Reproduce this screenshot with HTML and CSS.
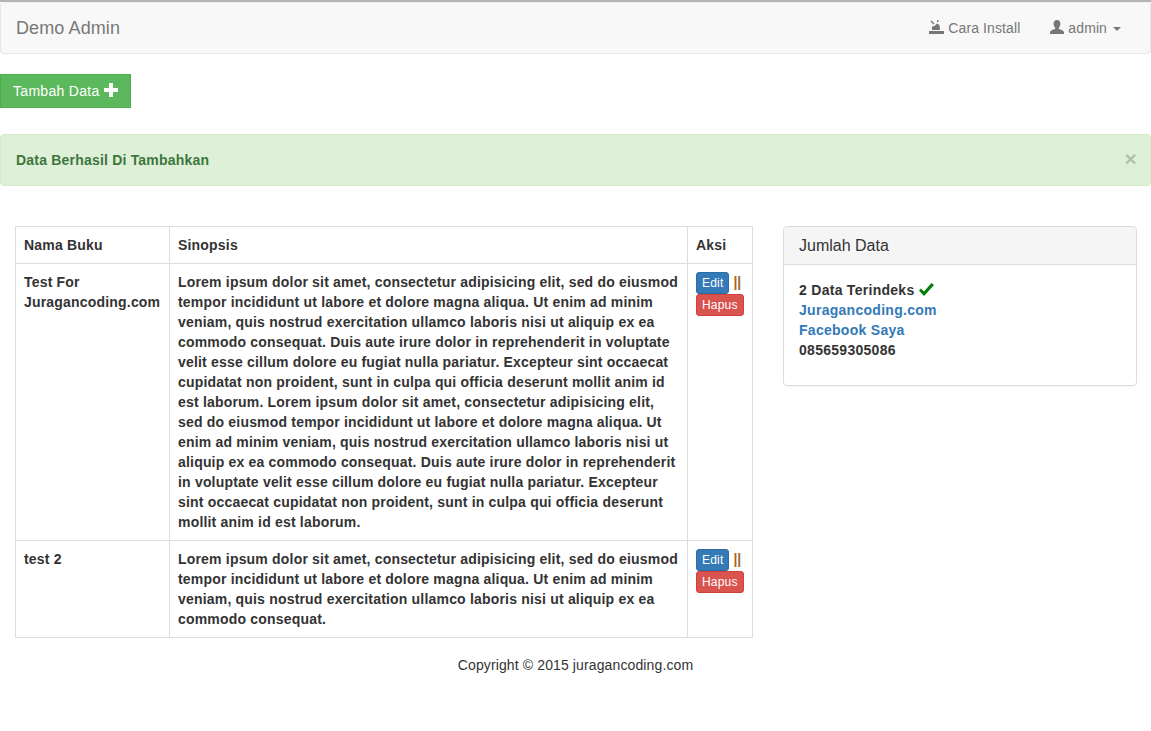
FILE: index.html
```html
<!DOCTYPE html>
<html lang="id">
<head>
<meta charset="utf-8">
<title>Demo Admin</title>
<link rel="stylesheet" href="styles.css">
</head>
<body>
<nav class="navbar">
  <a class="brand" href="#">Demo Admin</a>
  <ul class="nav">
    <li><a href="#"><svg class="ic" viewBox="0 0 15 14" width="15" height="14"><path fill="#777" d="M0 11h15v3H0zM3 10V6.500l2.500-.5 2.500-2.500 2.500 1.500.5 5zM1.500 1.500l1-1 3 3-1 1zM8 0h1.500v2H8z"/></svg> Cara Install</a></li>
    <li><a href="#"><svg class="ic" viewBox="0 0 14 14" width="14" height="14"><path fill="#777" d="M7 0c2.200 0 3.400 1.600 3.400 3.800 0 1.700-.7 3.200-1.600 4v1.300c2 .6 5.200 1.500 5.200 3.400V14H0v-1.500c0-1.900 3.200-2.800 5.200-3.400V7.800c-.9-.8-1.600-2.300-1.600-4C3.600 1.600 4.800 0 7 0z"/></svg> admin <span class="caret"></span></a></li>
  </ul>
</nav>
<a class="btn-add" href="#">Tambah Data <svg class="plus" viewBox="0 0 14 14" width="14" height="14"><path fill="#fff" d="M5 0h4v5h5v4H9v5H5V9H0V5h5z"/></svg></a>
<div class="alert">Data Berhasil Di Tambahkan<span class="close">×</span></div>
<main class="row">
  <section class="col-main">
    <table class="table">
      <thead>
        <tr><th class="c-name">Nama Buku</th><th class="c-syn">Sinopsis</th><th class="c-act">Aksi</th></tr>
      </thead>
      <tbody>
        <tr>
          <td>Test For Juragancoding.com</td>
          <td>Lorem ipsum dolor sit amet, consectetur adipisicing elit, sed do eiusmod tempor incididunt ut labore et dolore magna aliqua. Ut enim ad minim veniam, quis nostrud exercitation ullamco laboris nisi ut aliquip ex ea commodo consequat. Duis aute irure dolor in reprehenderit in voluptate velit esse cillum dolore eu fugiat nulla pariatur. Excepteur sint occaecat cupidatat non proident, sunt in culpa qui officia deserunt mollit anim id est laborum. Lorem ipsum dolor sit amet, consectetur adipisicing elit, sed do eiusmod tempor incididunt ut labore et dolore magna aliqua. Ut enim ad minim veniam, quis nostrud exercitation ullamco laboris nisi ut aliquip ex ea commodo consequat. Duis aute irure dolor in reprehenderit in voluptate velit esse cillum dolore eu fugiat nulla pariatur. Excepteur sint occaecat cupidatat non proident, sunt in culpa qui officia deserunt mollit anim id est laborum.</td>
          <td class="acts"><a class="xs blue" href="#">Edit</a> <span class="sep">||</span> <a class="xs red" href="#">Hapus</a></td>
        </tr>
        <tr>
          <td>test 2</td>
          <td>Lorem ipsum dolor sit amet, consectetur adipisicing elit, sed do eiusmod tempor incididunt ut labore et dolore magna aliqua. Ut enim ad minim veniam, quis nostrud exercitation ullamco laboris nisi ut aliquip ex ea commodo consequat.</td>
          <td class="acts"><a class="xs blue" href="#">Edit</a> <span class="sep">||</span> <a class="xs red" href="#">Hapus</a></td>
        </tr>
      </tbody>
    </table>
  </section>
  <aside class="col-side">
    <div class="panel">
      <div class="panel-head">Jumlah Data</div>
      <div class="panel-body">
        2 Data Terindeks <svg class="check" viewBox="0 0 15 13" width="15" height="13"><path fill="#008000" d="M0 7.500l2-2 3 3L12.500 0 15 2 5 13z"/></svg><br>
        <a href="#">Juragancoding.com</a><br>
        <a href="#">Facebook Saya</a><br>
        085659305086
      </div>
    </div>
  </aside>
</main>
<footer class="foot">Copyright © 2015 juragancoding.com</footer>
</body>
</html>
```
FILE: styles.css
```css
* { box-sizing: border-box; }
html, body { margin: 0; padding: 0; }
body {
  font-family: "Liberation Sans", Arial, sans-serif;
  font-size: 14px;
  line-height: 20px;
  color: #333;
  background: #fff;
  border-top: 2px solid #b4b4b4;
}
a { text-decoration: none; }
.navbar {
  display: flex;
  justify-content: space-between;
  height: 52px;
  background: #f8f8f8;
  border: 1px solid #e7e7e7;
  border-top-color: #f0f0f0;
  border-radius: 4px;
  margin-bottom: 20px;
}
.brand { color: #777; font-size: 18px; line-height: 20px; padding: 15px; letter-spacing: .1px; }
.nav { display: flex; list-style: none; margin: 0; padding: 0 14px 0 0; }
.nav a { display: block; color: #777; padding: 15px; letter-spacing: .1px; }
.ic { vertical-align: -1px; }
.caret {
  display: inline-block;
  width: 0; height: 0;
  margin-left: 2px;
  vertical-align: middle;
  border-top: 4px solid #777;
  border-left: 4px solid transparent;
  border-right: 4px solid transparent;
}
.btn-add {
  display: block;
  width: 131px;
  height: 34px;
  padding: 6px 12px;
  color: #fff;
  letter-spacing: .3px;
  background: #5cb85c;
  border: 1px solid #4cae4c;
  white-space: nowrap;
}
.plus { vertical-align: -1px; }
.alert {
  position: relative;
  height: 52px;
  margin-top: 26px;
  margin-bottom: 40px;
  padding: 15px;
  font-weight: bold;
  letter-spacing: .2px;
  color: #3c763d;
  background: #dff0d8;
  border: 1px solid #d6e9c6;
  border-radius: 4px;
}
.close {
  position: absolute;
  right: 13px;
  top: 14px;
  font-size: 21px;
  font-weight: bold;
  color: #000;
  opacity: .2;
}
.row { display: flex; padding: 0 14px 0 15px; gap: 30px; align-items: flex-start; }
.col-main { width: 738px; flex: none; }
.col-side { flex: 1; }
.table {
  width: 738px;
  table-layout: fixed;
  border-collapse: collapse;
  font-weight: bold;
  letter-spacing: .19px;
}
.table th, .table td {
  padding: 8px;
  border: 1px solid #ddd;
  vertical-align: top;
  text-align: left;
}
.c-name { width: 154px; }
.c-act { width: 65px; }
.acts { font-weight: normal; letter-spacing: 0; }
.xs {
  display: inline-block;
  padding: 1px 5px;
  font-size: 12px;
  line-height: 18px;
  letter-spacing: .2px;
  color: #fff;
  border: 1px solid;
  border-radius: 3px;
}
.blue { background: #337ab7; border-color: #2e6da4; }
.red { background: #d9534f; border-color: #d43f3a; }
.sep { color: #a8681f; font-weight: bold; }
.panel {
  height: 160px;
  border: 1px solid #ddd;
  border-radius: 4px;
  box-shadow: 0 1px 1px rgba(0,0,0,.05);
}
.panel-head {
  height: 38px;
  padding: 10px 15px;
  font-size: 16px;
  line-height: 18px;
  background: #f5f5f5;
  border-bottom: 1px solid #ddd;
  border-radius: 3px 3px 0 0;
}
.panel-body { padding: 15px; font-weight: bold; letter-spacing: .28px; }
.panel-body a { color: #337ab7; }
.check { vertical-align: -1px; }
.foot { margin-top: 17px; text-align: center; letter-spacing: .12px; }
```
